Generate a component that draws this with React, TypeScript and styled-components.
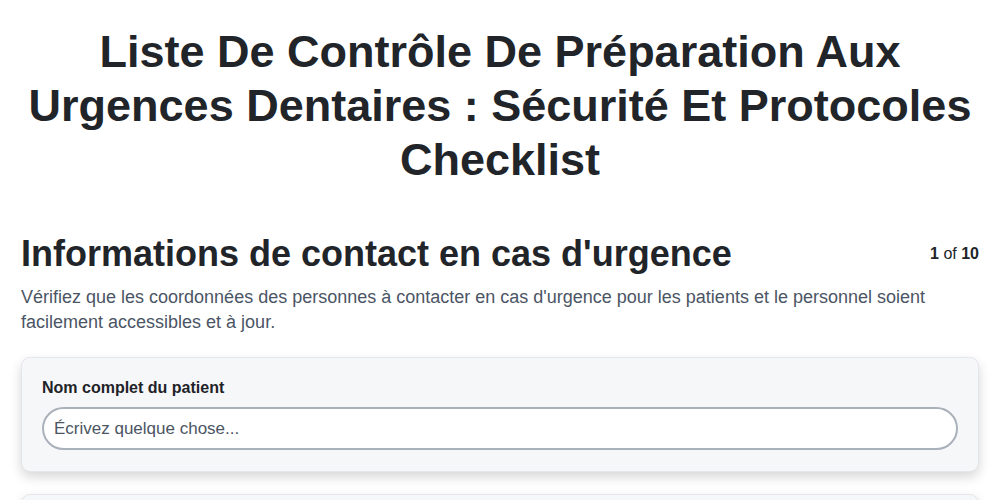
import styled, { createGlobalStyle } from 'styled-components';

const GlobalStyle = createGlobalStyle`
  body {
    margin: 0;
    background: #ffffff;
    font-family: "Liberation Sans", Arial, sans-serif;
    color: #212529;
  }
  * { box-sizing: border-box; }
`;

const Page = styled.main`
  padding: 0 21px 40px;
`;

const Title = styled.h1`
  margin: 25px auto 45px;
  max-width: 960px;
  text-align: center;
  font-size: 45px;
  line-height: 54px;
  font-weight: 700;
  color: #212529;
`;

const StepHeader = styled.div`
  display: flex;
  align-items: center;
  justify-content: space-between;
  gap: 16px;
`;

const StepTitle = styled.h2`
  margin: 0;
  font-size: 36px;
  line-height: 1.2;
  font-weight: 700;
  color: #212529;
`;

const Counter = styled.div`
  font-size: 16px;
  line-height: 1.5;
  color: #212529;
  white-space: nowrap;
  b { font-weight: 700; }
`;

const Description = styled.p`
  margin: 10px 0 22px;
  font-size: 18px;
  line-height: 25px;
  color: #4b5565;
`;

const Fields = styled.div`
  display: flex;
  flex-direction: column;
  gap: 22px;
`;

const Card = styled.div`
  background: #f6f7f9;
  border: 1px solid #e4e6ea;
  border-radius: 9px;
  padding: 18px 20px 21px;
  box-shadow: 0 5px 12px rgba(0, 0, 0, 0.16);
`;

const Label = styled.label`
  display: block;
  font-size: 16px;
  line-height: 1.5;
  font-weight: 700;
  color: #1f2328;
  margin-bottom: 7px;
`;

const TextInput = styled.input`
  display: block;
  width: 100%;
  height: 43px;
  padding: 0 10px;
  border: 2px solid #a9b1ba;
  border-radius: 999px;
  background: #ffffff;
  font-family: "Liberation Sans", Arial, sans-serif;
  font-size: 17px;
  color: #212529;
  outline: none;
  &::placeholder { color: #4b5563; }
`;

const fields = ['Nom complet du patient', 'Numéro de téléphone d\'urgence'];

export default function App() {
  return (
    <>
      <GlobalStyle />
      <Page>
        <Title>
          Liste De Contrôle De Préparation Aux Urgences Dentaires : Sécurité Et Protocoles Checklist
        </Title>
        <StepHeader>
          <StepTitle>Informations de contact en cas d'urgence</StepTitle>
          <Counter><b>1</b> of <b>10</b></Counter>
        </StepHeader>
        <Description>
          Vérifiez que les coordonnées des personnes à contacter en cas d'urgence pour les patients et le personnel soient facilement accessibles et à jour.
        </Description>
        <Fields>
          {fields.map((f) => (
            <Card key={f}>
              <Label>{f}</Label>
              <TextInput type="text" placeholder="Écrivez quelque chose..." />
            </Card>
          ))}
        </Fields>
      </Page>
    </>
  );
}
